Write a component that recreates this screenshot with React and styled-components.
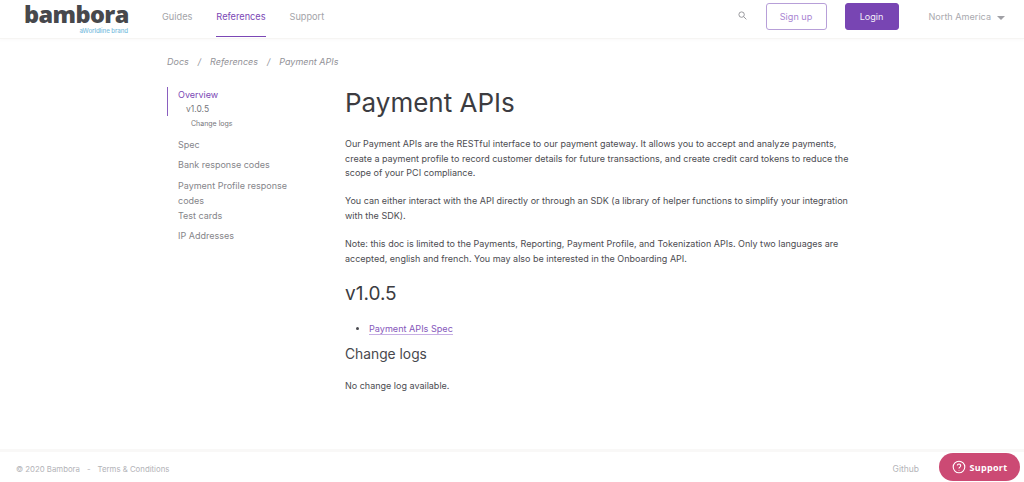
import React from 'react';
import styled, { createGlobalStyle } from 'styled-components';

const Global = createGlobalStyle`
  html, body { margin: 0; padding: 0; background: #fff; }
  body { font-family: Inter, "Liberation Sans", sans-serif; color: #4a4a4f; overflow: hidden; }
`;

const Page = styled.div`
  height: 482px;
  display: flex;
  flex-direction: column;
  position: relative;
`;

const Header = styled.header`
  height: 38px;
  flex: none;
  display: flex;
  align-items: stretch;
  padding: 0 19px 0 24px;
  border-bottom: 1px solid #f6f5f3;
  box-shadow: 0 1px 3px rgba(120, 110, 90, 0.04);
`;

const Logo = styled.div`
  width: 104px;
  margin-right: 34px;
  display: flex;
  flex-direction: column;
  align-items: flex-end;
`;

const LogoWord = styled.span`
  font-family: "Open Sans", sans-serif;
  font-size: 23.5px;
  line-height: 20px;
  font-weight: 800;
  letter-spacing: -0.6px;
  color: #47484c;
  margin-top: 4px;
  width: 104px;
`;

const LogoTag = styled.span`
  font-size: 6.2px;
  line-height: 7px;
  font-weight: 500;
  letter-spacing: -0.1px;
  color: #7cc0e0;
  margin-top: 3px;
`;

const NavItem = styled.a`
  display: flex;
  align-items: center;
  font-size: 9.2px;
  height: 32px;
  padding-bottom: 4px;
  margin-right: 24px;
  color: ${props => (props.$active ? '#7b47b5' : '#a3a3a8')};
  border-bottom: 1px solid ${props => (props.$active ? '#7b47b5' : 'transparent')};
`;

const HeaderRight = styled.div`
  margin-left: auto;
  display: flex;
  align-items: center;
  height: 33px;
`;

const SearchIcon = styled.svg`
  width: 9px;
  height: 9px;
  margin-right: 19px;
  margin-bottom: 2px;
`;

const HeaderButton = styled.a`
  width: ${props => (props.$filled ? '54px' : '61px')};
  height: 27px;
  box-sizing: border-box;
  border-radius: 3px;
  display: flex;
  align-items: center;
  justify-content: center;
  font-size: 9.1px;
  border: 1px solid ${props => (props.$filled ? '#7845b3' : '#b79fd8')};
  background: ${props => (props.$filled ? '#7845b3' : '#fff')};
  color: ${props => (props.$filled ? '#f3eef9' : '#a985d2')};
  margin-right: ${props => (props.$filled ? '30px' : '18px')};
`;

const Region = styled.span`
  font-size: 9.1px;
  color: #a9a9ae;
  display: flex;
  align-items: center;
  gap: 6px;
`;

const Caret = styled.i`
  width: 0;
  height: 0;
  border-left: 4px solid transparent;
  border-right: 4px solid transparent;
  border-top: 4px solid #a0a0a5;
  margin-top: 2px;
`;

const Main = styled.main`
  flex: 1;
  width: 690px;
  padding-left: 167px;
`;

const Crumbs = styled.nav`
  display: flex;
  gap: 9px;
  height: 13px;
  line-height: 13px;
  margin-top: 16px;
  font-size: 9px;
  font-style: italic;
  color: #929297;
`;

const Columns = styled.div`
  display: flex;
  margin-top: 19px;
`;

const Side = styled.aside`
  width: 178px;
  flex: none;
  font-size: 9px;
  color: #85858a;
`;

const ActiveGroup = styled.div`
  border-left: 1px solid #8a5fbf;
  padding-left: 10px;
  height: 29px;
`;

const SideLink = styled.div`
  line-height: 15px;
  width: 120px;
  padding-left: 11px;
  margin-top: ${props => props.$gap || 0}px;
`;

const Current = styled.div`
  color: #7b47b5;
  line-height: 15px;
`;

const SubLink = styled.div`
  font-size: ${props => (props.$deep ? '7px' : '8.5px')};
  line-height: 15px;
  margin-left: ${props => (props.$deep ? '13px' : '8px')};
  padding-left: ${props => (props.$deep ? '11px' : 0)};
  color: #76767b;
`;

const Content = styled.article`
  flex: 1;
  min-width: 0;
`;

const Title = styled.h1`
  margin: 0;
  font-size: 26px;
  line-height: 32px;
  font-weight: 400;
  color: #3c3c41;
`;

const Para = styled.p`
  margin: ${props => props.$top}px 0 0;
  font-size: 9px;
  line-height: 14.5px;
  color: #4c4c51;
`;

const SubTitle = styled.h2`
  margin: 16px 0 0;
  font-size: 19px;
  line-height: 24px;
  font-weight: 400;
  color: #3c3c41;
`;

const Bullets = styled.ul`
  margin: 16px 0 0;
  padding-left: 24px;
  font-size: 9.1px;
  line-height: 14px;
`;

const SpecLink = styled.a`
  color: #8657bb;
  border-bottom: 1px solid #c6aee3;
`;

const LogsTitle = styled.h3`
  margin: 9px 0 0;
  font-size: 13.8px;
  line-height: 18px;
  font-weight: 400;
  color: #48484d;
`;

const Footer = styled.footer`
  height: 33px;
  flex: none;
  padding: 4px 105px 0 16px;
  box-sizing: border-box;
  border-top: 3px solid #f9f8f7;
  display: flex;
  align-items: center;
  font-size: 7.8px;
  color: #b3b3b8;
`;

const FooterDot = styled.span`
  margin: 0 7px;
`;

const Github = styled.span`
  margin-left: auto;
  font-size: 8.5px;
`;

const SupportButton = styled.button`
  position: absolute;
  right: 4px;
  bottom: 1px;
  width: 81px;
  height: 28px;
  border: 0;
  border-radius: 14px;
  background: #cc4a74;
  color: #fff;
  display: flex;
  align-items: center;
  justify-content: center;
  gap: 4px;
  padding: 0;
  font-family: "Open Sans", sans-serif;
  font-size: 9px;
  font-weight: 700;
  letter-spacing: 0.3px;
`;

const HelpIcon = styled.svg`
  width: 14px;
  height: 14px;
`;

export default function App() {
  return (
    <Page>
      <Global />
      <Header>
        <Logo>
          <LogoWord>bambora</LogoWord>
          <LogoTag>aWorldline brand</LogoTag>
        </Logo>
        <NavItem>Guides</NavItem>
        <NavItem $active>References</NavItem>
        <NavItem>Support</NavItem>
        <HeaderRight>
          <SearchIcon viewBox="0 0 10 10" fill="none" stroke="#8f8f94" strokeWidth="1">
            <circle cx="4" cy="4" r="3" />
            <path d="M6.2 6.2 9.3 9.3" />
          </SearchIcon>
          <HeaderButton>Sign up</HeaderButton>
          <HeaderButton $filled>Login</HeaderButton>
          <Region>North America <Caret /></Region>
        </HeaderRight>
      </Header>
      <Main>
        <Crumbs>
          <span>Docs</span><span>/</span><span>References</span><span>/</span><span>Payment APIs</span>
        </Crumbs>
        <Columns>
          <Side>
            <ActiveGroup>
              <Current>Overview</Current>
              <SubLink>v1.0.5</SubLink>
            </ActiveGroup>
            <SubLink $deep>Change logs</SubLink>
            <SideLink $gap={6}>Spec</SideLink>
            <SideLink $gap={5}>Bank response codes</SideLink>
            <SideLink $gap={6}>Payment Profile response codes</SideLink>
            <SideLink>Test cards</SideLink>
            <SideLink $gap={5}>IP Addresses</SideLink>
          </Side>
          <Content>
            <Title>Payment APIs</Title>
            <Para $top={18}>
              Our Payment APIs are the RESTful interface to our payment gateway. It allows you to accept and analyze payments, create a payment profile to record customer details for future transactions, and create credit card tokens to reduce the scope of your PCI compliance.
            </Para>
            <Para $top={13.5}>
              You can either interact with the API directly or through an SDK (a library of helper functions to simplify your integration with the SDK).
            </Para>
            <Para $top={14}>
              Note: this doc is limited to the Payments, Reporting, Payment Profile, and Tokenization APIs. Only two languages are accepted, english and french. You may also be interested in the Onboarding API.
            </Para>
            <SubTitle>v1.0.5</SubTitle>
            <Bullets>
              <li><SpecLink>Payment APIs Spec</SpecLink></li>
            </Bullets>
            <LogsTitle>Change logs</LogsTitle>
            <Para $top={16}>No change log available.</Para>
          </Content>
        </Columns>
      </Main>
      <Footer>
        <span>© 2020 Bambora</span>
        <FooterDot>-</FooterDot>
        <span>Terms &amp; Conditions</span>
        <Github>Github</Github>
      </Footer>
      <SupportButton>
        <HelpIcon viewBox="0 0 14 14" fill="none" stroke="#fff" strokeWidth="1.1">
          <circle cx="7" cy="7" r="5.8" />
          <path d="M5.3 5.6a1.7 1.7 0 1 1 2.6 1.5c-.6.4-.9.7-.9 1.3" />
          <path d="M7 10v.6" />
        </HelpIcon>
        Support
      </SupportButton>
    </Page>
  );
}
